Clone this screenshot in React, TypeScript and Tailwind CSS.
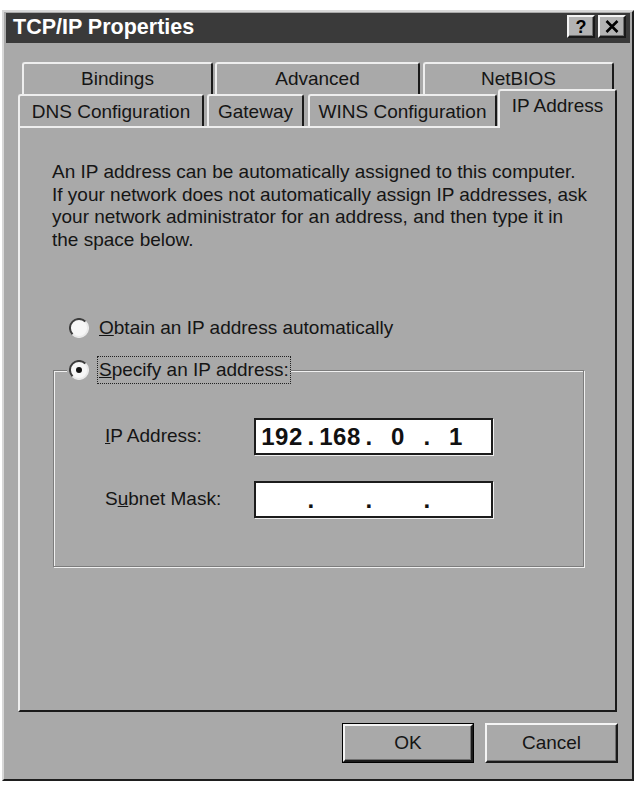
import React from 'react'

const face = 'bg-[#a9a9a9]'
const raised =
  'border-2 border-t-[#f4f4f4] border-l-[#f4f4f4] border-r-[#1a1a1a] border-b-[#1a1a1a] shadow-[inset_-1px_-1px_0_#6f6f6f]'

function Radio({ checked }: { checked?: boolean }) {
  return (
    <svg width="20" height="20" viewBox="0 0 20 20" className="shrink-0">
      <circle cx="10" cy="10" r="9" fill="#f6f6f6" />
      <path d="M3.6 16.4 A9 9 0 0 1 16.4 3.6" stroke="#3c3c3c" strokeWidth="2" fill="none" />
      <path d="M16.4 3.6 A9 9 0 0 1 3.6 16.4" stroke="#e9e9e9" strokeWidth="2" fill="none" />
      {checked && <circle cx="10" cy="10" r="3" fill="#111" />}
    </svg>
  )
}

function BackTab({ label, width, ml }: { label: string; width: string; ml: string }) {
  return (
    <div
      className={`${width} ${ml} h-[32px] ${face} rounded-t-[3px] border-t-2 border-l-2 border-r-2 border-t-[#eeeeee] border-l-[#eeeeee] border-r-[#1a1a1a] flex justify-center pt-[4px] text-[19px] leading-[22px] text-[#151515]`}
    >
      {label}
    </div>
  )
}

function FrontTab({ label, width, ml, active }: { label: string; width: string; ml: string; active?: boolean }) {
  return (
    <div
      className={`${width} ${ml} ${active ? 'h-[39px] -mb-[2px] relative z-20 pt-[4px]' : 'h-[32px] pt-[5px]'} ${face} rounded-t-[3px] border-t-2 border-l-2 border-r-2 border-t-[#eeeeee] border-l-[#eeeeee] border-r-[#1a1a1a] flex justify-center text-[19px] leading-[22px] text-[#151515]`}
    >
      {label}
    </div>
  )
}

function IpField({ octets }: { octets: string[] }) {
  return (
    <div className="w-[239px] h-[37px] bg-white border-2 border-[#1c1c1c] shadow-[1px_1px_0_#efefef] flex items-center pl-[4px] font-['Liberation_Sans',Arial,sans-serif] font-bold text-[24px] tracking-[0.5px] text-[#111]">
      {octets.map((o, i) => (
        <React.Fragment key={i}>
          <span className="w-[44px] text-center">{o}</span>
          {i < 3 && <span className="w-[14px] text-center">.</span>}
        </React.Fragment>
      ))}
    </div>
  )
}

export default function App() {
  return (
    <div className="min-h-screen bg-white pt-[10px] pl-[2px] font-['Liberation_Sans',Arial,sans-serif] text-[#151515]">
      <div
        className={`w-[632px] h-[771px] ${face} border-2 border-t-[#d8d8d8] border-l-[#d8d8d8] border-r-[#1e1e1e] border-b-[#1e1e1e] px-[2px] pt-[1px]`}
      >
        {/* title bar */}
        <div className="h-[30px] bg-[#3a3a3a] flex items-center pl-[7px] pr-[4px]">
          <span className="text-white font-bold text-[21.5px] leading-none">TCP/IP Properties</span>
          <div className="ml-auto flex gap-[3px] self-start mt-[2px]">
            <div className={`w-[28px] h-[23px] ${raised} bg-[#b3b3b3] flex items-center justify-center text-[18px] font-bold leading-none text-black`}>
              ?
            </div>
            <div className={`w-[28px] h-[23px] ${raised} bg-[#b3b3b3] flex items-center justify-center`}>
              <svg width="14" height="13" viewBox="0 0 14 13">
                <path d="M1.5 1 L12.5 12 M12.5 1 L1.5 12" stroke="#000" strokeWidth="2.6" />
              </svg>
            </div>
          </div>
        </div>

        {/* tabs + page */}
        <div className="ml-[12px] mt-[19px] w-[600px]">
          <div className="flex">
            <BackTab label="Bindings" width="w-[191px]" ml="ml-[4px]" />
            <BackTab label="Advanced" width="w-[205px]" ml="ml-[2px]" />
            <BackTab label="NetBIOS" width="w-[191px]" ml="ml-[3px]" />
          </div>
          <div className="flex items-end h-[32px]">
            <FrontTab label="DNS Configuration" width="w-[186px]" ml="ml-0" />
            <FrontTab label="Gateway" width="w-[97px]" ml="ml-[3px]" />
            <FrontTab label="WINS Configuration" width="w-[189px]" ml="ml-[4px]" />
            <FrontTab label="IP Address" width="w-[119px]" ml="ml-[1px]" active />
          </div>

          <div className={`w-[599px] h-[586px] ${face} border-2 border-t-[#eeeeee] border-l-[#eeeeee] border-r-[#1a1a1a] border-b-[#1a1a1a] relative z-10`}>
            <p className="pl-[32px] pt-[33px] text-[19px] leading-[22.5px]">
              An IP address can be automatically assigned to this computer.
              <br />
              If your network does not automatically assign IP addresses, ask
              <br />
              your network administrator for an address, and then type it in
              <br />
              the space below.
            </p>

            <div className="mt-[65px] pl-[49px] h-[24px] flex items-center gap-[8px]">
              <Radio />
              <span className="border border-transparent px-[1px] text-[19px]">
                <u>O</u>btain an IP address automatically
              </span>
            </div>

            <fieldset className="mt-[16px] ml-[33px] w-[531px] h-[211px] border border-[#7c7c7c] shadow-[1px_1px_0_#f0f0f0,inset_1px_1px_0_#f0f0f0] pl-[13px] pt-[34px]">
              <legend className={`${face} pl-[2px] pr-[0px]`}>
                <div className="h-[28px] flex items-center gap-[8px]">
                  <Radio checked />
                  <span className="h-[28px] flex items-center border border-dotted border-[#222] px-[1px] text-[19px]">
                    <span>
                      <u>S</u>pecify an IP address:
                    </span>
                  </span>
                </div>
              </legend>

              <div className="flex flex-col gap-[26px] pl-[38px]">
                <div className="flex items-center">
                  <span className="w-[149px] text-[19px]">
                    <u>I</u>P Address:
                  </span>
                  <IpField octets={['192', '168', '0', '1']} />
                </div>
                <div className="flex items-center">
                  <span className="w-[149px] text-[19px]">
                    S<u>u</u>bnet Mask:
                  </span>
                  <IpField octets={['', '', '', '']} />
                </div>
              </div>
            </fieldset>
          </div>

          {/* buttons */}
          <div className="mt-[11px] flex justify-end gap-[11px]">
            <div className="w-[132px] h-[40px] border border-black">
              <div className={`w-full h-full ${raised} flex items-center justify-center text-[19px]`}>OK</div>
            </div>
            <div className={`w-[133px] h-[40px] ${raised} flex items-center justify-center text-[19px]`}>Cancel</div>
          </div>
        </div>
      </div>
    </div>
  )
}
